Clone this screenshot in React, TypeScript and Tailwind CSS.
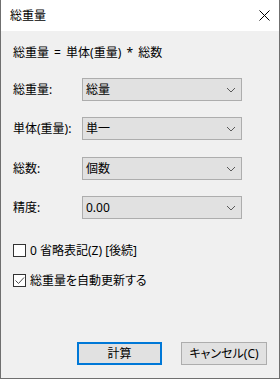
import React from "react";

const font = { fontFamily: '"Noto Sans", "Noto Sans CJK JP", sans-serif' };

function Chevron() {
  return (
    <svg width="10" height="6" viewBox="0 0 10 6" className="shrink-0">
      <path d="M1 1 L5 5 L9 1" fill="none" stroke="#5a5a5a" strokeWidth="1" />
    </svg>
  );
}

function Row({ label, value, mt }: { label: string; value: string; mt: string }) {
  return (
    <div className={`flex items-center h-[23px] ${mt}`}>
      <div className="w-[69px] text-[12px] leading-[16px] text-black">{label}</div>
      <div className="w-[160px] h-[23px] border border-[#adadad] bg-[#e1e1e1] flex items-center pl-[3px] pr-[5px]">
        <span className="flex-1 text-[12px] leading-[16px] text-black">{value}</span>
        <Chevron />
      </div>
    </div>
  );
}

export default function App() {
  return (
    <div
      style={font}
      className="w-[280px] h-[379px] border-l border-r border-b border-[#6f6f6f] bg-[#f0f0f0] flex flex-col text-black"
    >
      <div className="h-[31px] bg-white flex items-center justify-between pl-[9px] pr-[9px]">
        <span className="text-[12px] leading-[16px]">総重量</span>
        <svg width="11" height="11" viewBox="0 0 11 11">
          <path d="M0.5 0.5 L10.5 10.5 M10.5 0.5 L0.5 10.5" stroke="#000" strokeWidth="1" />
        </svg>
      </div>
      <div className="flex flex-col pl-[12px] pr-[12px]">
        <div className="mt-[14px] text-[12px] leading-[16px] [word-spacing:2px]">総重量 = 単体(重量) * 総数</div>
        <Row label="総重量:" value="総量" mt="mt-[17px]" />
        <Row label="単体(重量):" value="単一" mt="mt-[16px]" />
        <Row label="総数:" value="個数" mt="mt-[17px]" />
        <Row label="精度:" value="0.00" mt="mt-[16px]" />
        <div className="mt-[25px] flex items-center h-[13px]">
          <div className="w-[13px] h-[13px] border border-[#333333] bg-white" />
          <span className="ml-[4px] text-[12px] leading-[16px] [font-feature-settings:'palt']">0 省略表記(Z) [後続]</span>
        </div>
        <div className="mt-[17px] flex items-center h-[13px]">
          <div className="w-[13px] h-[13px] border border-[#333333] bg-white flex items-center justify-center">
            <svg width="11" height="11" viewBox="0 0 11 11">
              <path d="M1.5 5.5 L4.5 8.5 L10 2.5" fill="none" stroke="#4a4a4a" strokeWidth="1" />
            </svg>
          </div>
          <span className="ml-[4px] text-[12px] leading-[16px] [font-feature-settings:'palt']">総重量を自動更新する</span>
        </div>
        <div className="mt-[55px] flex justify-end gap-[19px] pr-[0px]">
          <button className="w-[85px] h-[23px] border-2 border-[#0078d7] bg-[#e1e1e1] text-[12px] leading-[16px] flex items-center justify-center">
            計算
          </button>
          <button className="w-[86px] h-[23px] border border-[#adadad] bg-[#e1e1e1] text-[12px] leading-[16px] flex items-center justify-center [font-feature-settings:'palt']">
            キャンセル(C)
          </button>
        </div>
      </div>
    </div>
  );
}
